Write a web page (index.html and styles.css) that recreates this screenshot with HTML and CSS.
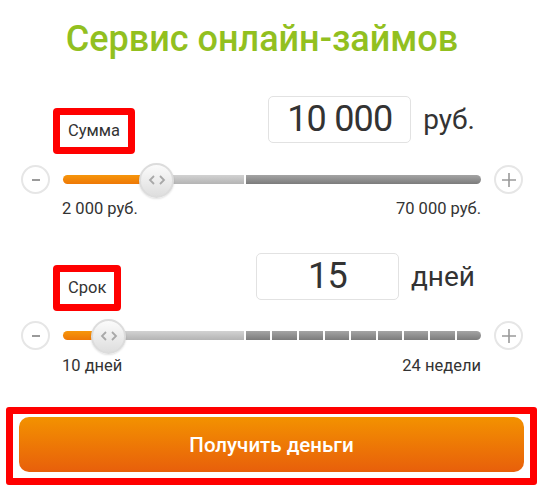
FILE: index.html
```html
<!DOCTYPE html>
<html lang="ru">
<head>
<meta charset="UTF-8" />
<title>Сервис онлайн-займов</title>
<link rel="stylesheet" href="styles.css">
</head>
<body>
  <div class="calc">
    <h1 class="title">Сервис онлайн-займов</h1>

    <div class="field field-sum">
      <div class="field-head">
        <div class="label-box">Сумма</div>
        <div class="value-group">
          <div class="value-input">10 000</div>
          <span class="value-unit">руб.</span>
        </div>
      </div>
      <div class="slider">
        <span class="step-btn">
          <svg width="14" height="14" viewBox="0 0 14 14"><path d="M3 7h8" stroke="#9a9a9a" stroke-width="2"/></svg>
        </span>
        <div class="track">
          <div class="track-fill" style="width: 93px"></div>
          <div class="track-light"></div>
          <div class="track-dark"></div>
          <span class="thumb" style="left: 93px">
            <svg width="20" height="14" viewBox="0 0 20 14"><path d="M7 3L3 7l4 4M13 3l4 4-4 4" fill="none" stroke="#a8a8a8" stroke-width="1.8"/></svg>
          </span>
        </div>
        <span class="step-btn">
          <svg width="16" height="16" viewBox="0 0 16 16"><path d="M8 1v14M1 8h14" stroke="#9a9a9a" stroke-width="1.6"/></svg>
        </span>
      </div>
      <div class="range-labels">
        <span>2 000 руб.</span>
        <span>70 000 руб.</span>
      </div>
    </div>

    <div class="field field-term">
      <div class="field-head">
        <div class="label-box">Срок</div>
        <div class="value-group">
          <div class="value-input">15</div>
          <span class="value-unit">дней</span>
        </div>
      </div>
      <div class="slider">
        <span class="step-btn">
          <svg width="14" height="14" viewBox="0 0 14 14"><path d="M3 7h8" stroke="#9a9a9a" stroke-width="2"/></svg>
        </span>
        <div class="track">
          <div class="track-fill" style="width: 45px"></div>
          <div class="track-light"></div>
          <div class="track-segments">
            <span></span><span></span><span></span><span></span><span></span>
            <span></span><span></span><span></span><span></span>
          </div>
          <span class="thumb" style="left: 45px">
            <svg width="20" height="14" viewBox="0 0 20 14"><path d="M7 3L3 7l4 4M13 3l4 4-4 4" fill="none" stroke="#a8a8a8" stroke-width="1.8"/></svg>
          </span>
        </div>
        <span class="step-btn">
          <svg width="16" height="16" viewBox="0 0 16 16"><path d="M8 1v14M1 8h14" stroke="#9a9a9a" stroke-width="1.6"/></svg>
        </span>
      </div>
      <div class="range-labels">
        <span>10 дней</span>
        <span>24 недели</span>
      </div>
    </div>

    <div class="submit-frame">
      <button class="submit-btn">Получить деньги</button>
    </div>
  </div>
</body>
</html>
```

FILE: styles.css
```css
* {
  box-sizing: border-box;
}
html, body {
  margin: 0;
  padding: 0;
  background: #fff;
  font-family: Roboto, 'Liberation Sans', Arial, sans-serif;
  color: #333;
}
.calc {
  width: 542px;
  padding-top: 18px;
}
.title {
  margin: 0;
  padding-right: 18px;
  text-align: center;
  font-size: 36px;
  line-height: 42px;
  font-weight: 500;
  color: #92c01f;
}
.field {
  margin-top: 36px;
}
.field-term {
  margin-top: 34px;
}
.field-head {
  display: flex;
  justify-content: space-between;
  align-items: flex-start;
  padding: 0 67px 0 53px;
}
.label-box {
  margin-top: 12px;
  border: 7px solid #ff0000;
  border-radius: 4px;
  padding: 5px 8px 6px 8px;
  font-size: 16.5px;
  line-height: 21px;
  color: #333;
}
.value-group {
  display: flex;
  align-items: center;
  gap: 12px;
}
.value-input {
  width: 143px;
  height: 47px;
  border: 1px solid #e2e2e2;
  border-radius: 5px;
  text-align: center;
  font-size: 36px;
  line-height: 45px;
  letter-spacing: -0.8px;
  color: #333;
}
.value-unit {
  font-size: 28px;
  color: #333;
}
.slider {
  display: flex;
  align-items: center;
  gap: 13px;
  padding: 0 19px 0 21px;
  margin-top: 11px;
}
.field-term .slider {
  margin-top: 10px;
}
.step-btn {
  width: 29px;
  height: 29px;
  border: 2px solid #e6e6e6;
  border-radius: 50%;
  display: flex;
  align-items: center;
  justify-content: center;
  flex: none;
}
.track {
  flex: 1;
  height: 9px;
  display: flex;
  position: relative;
}
.track-fill {
  flex: none;
  background: linear-gradient(#f6960b, #ee7806);
  border-radius: 5px 0 0 5px;
}
.track-light {
  width: 0;
  flex: 1;
  background: linear-gradient(#d2d2d2, #b4b4b4);
  margin-right: 2px;
}
.field-sum .track-light {
  flex: 0 0 88px;
}
.field-term .track-light {
  flex: 0 0 136px;
}
.track-dark {
  flex: 1;
  background: linear-gradient(#a4a4a4, #7c7c7c);
  border-radius: 0 5px 5px 0;
}
.track-segments {
  flex: 1;
  display: flex;
  gap: 2px;
}
.track-segments span {
  flex: 1;
  background: linear-gradient(#a4a4a4, #7c7c7c);
}
.track-segments span:last-child {
  border-radius: 0 5px 5px 0;
}
.thumb {
  position: absolute;
  top: 50%;
  width: 35px;
  height: 35px;
  margin: -17px 0 0 -17px;
  border-radius: 50%;
  border: 2px solid #dcdcdc;
  background: linear-gradient(#fbfbfb, #dedede);
  box-shadow: 0 1px 2px rgba(0, 0, 0, 0.12);
  display: flex;
  align-items: center;
  justify-content: center;
}
.range-labels {
  display: flex;
  justify-content: space-between;
  padding: 0 61px 0 62px;
  margin-top: 5px;
  font-size: 16.5px;
  line-height: 20px;
  color: #333;
}
.field-term .range-labels {
  margin-top: 6px;
}
.submit-frame {
  margin: 31px 5px 0 6px;
  border: 7px solid #ff0000;
  border-radius: 3px;
  padding: 3px 6px 6px 6px;
}
.submit-btn {
  display: block;
  width: 100%;
  height: 55px;
  border: none;
  border-radius: 10px;
  background: linear-gradient(#f39200, #e85f0b);
  color: #fff;
  font-family: Roboto, 'Liberation Sans', Arial, sans-serif;
  font-size: 20.5px;
  font-weight: 500;
  cursor: pointer;
}
```
